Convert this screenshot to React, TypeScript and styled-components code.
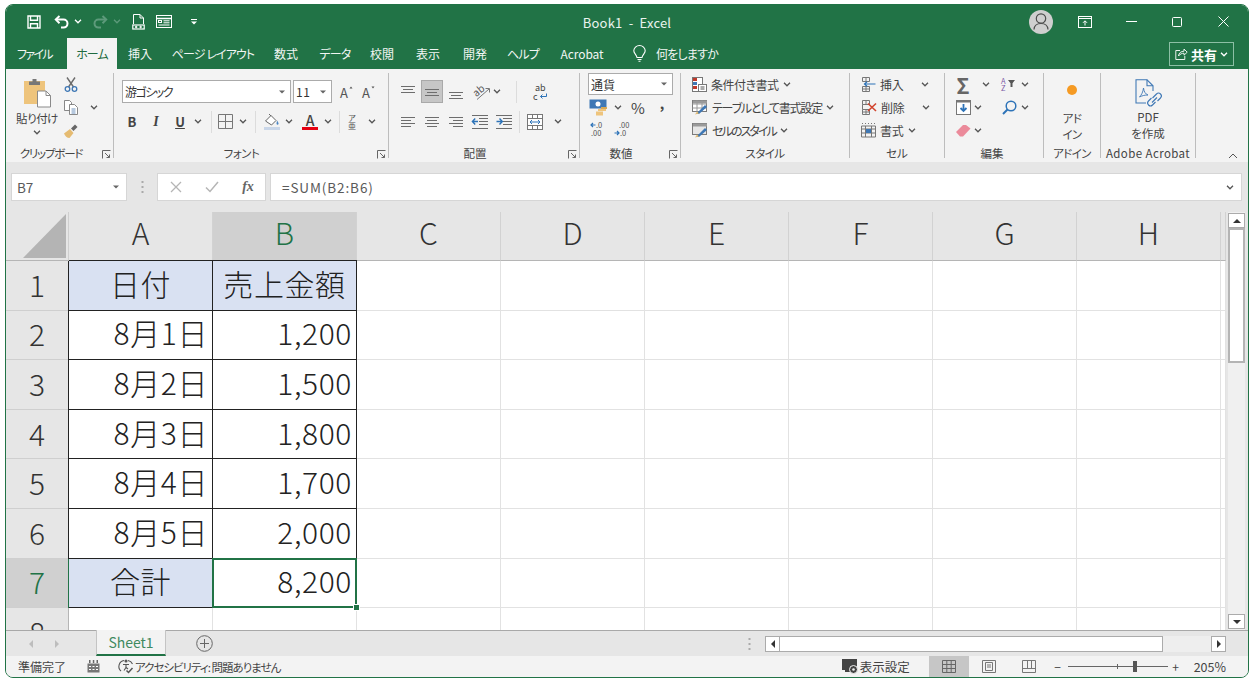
import React from "react";
import styled, { createGlobalStyle } from "styled-components";

const GREEN = "#217346";
const INK = "#444";

const GlobalStyle = createGlobalStyle`
  html, body {
    margin: 0;
    background: #fff;
  }
  body {
    font-family: "Noto Sans CJK JP", "Noto Sans", sans-serif;
    font-feature-settings: "palt";
    font-size: 12px;
    color: ${INK};
  }
  svg {
    display: block;
    flex: none;
    overflow: visible;
  }
`;

const Page = styled.div`
  padding: 4px 0 0 5px;
  width: 1244px;
`;

const Window = styled.div`
  box-sizing: border-box;
  width: 1244px;
  height: 674px;
  border: 1px solid ${GREEN};
  border-radius: 8px;
  overflow: hidden;
  display: flex;
  flex-direction: column;
  background: #e6e6e6;
`;

/* title bar */
const TitleBar = styled.div`
  height: 33px;
  flex: none;
  background: ${GREEN};
  display: grid;
  grid-template-columns: 1fr auto 1fr;
  align-items: center;
`;

const Qat = styled.div`
  display: flex;
  align-items: center;
  padding-left: 20px;
`;

const WindowButtons = styled.div`
  display: flex;
  align-items: center;
  justify-content: flex-end;
  padding-right: 2px;
`;

const Title = styled.div`
  color: #eaf3ee;
  font-size: 13px;
  letter-spacing: 0.2px;
  white-space: pre;
  padding-top: 2px;
`;

const Avatar = styled.div`
  width: 24px;
  height: 24px;
  border-radius: 50%;
  background: #cfcfcf;
  margin-right: 9px;
  display: flex;
  align-items: center;
  justify-content: center;
`;

/* generic fixed-width holder for a ribbon or toolbar glyph */
const Slot = styled.div<{
  $w: number;
  $ml?: number;
  $mt?: number;
  $pb?: number;
  $color?: string;
  $size?: number;
  $bold?: boolean;
}>`
  width: ${(p) => p.$w}px;
  margin-left: ${(p) => p.$ml || 0}px;
  margin-top: ${(p) => p.$mt || 0}px;
  padding-bottom: ${(p) => p.$pb || 0}px;
  flex: none;
  display: flex;
  align-items: center;
  justify-content: center;
  color: ${(p) => p.$color || INK};
  font-size: ${(p) => p.$size || 12}px;
  font-weight: ${(p) => (p.$bold ? 700 : 400)};
  white-space: nowrap;
`;

const ItalicMark = styled.span`
  font-family: "Liberation Serif", serif;
  font-style: italic;
  font-weight: 700;
  font-size: 14px;
`;

const UnderMark = styled.span`
  font-weight: 700;
  font-size: 13px;
  text-decoration: underline;
`;

/* tabs */
const TabRow = styled.div`
  height: 31px;
  flex: none;
  background: ${GREEN};
  display: flex;
`;

const Tab = styled.div<{ $w: number; $active?: boolean; $ml?: number; $ls?: number }>`
  width: ${(p) => p.$w}px;
  margin-left: ${(p) => p.$ml || 0}px;
  flex: none;
  display: flex;
  align-items: center;
  justify-content: center;
  white-space: nowrap;
  font-size: 12px;
  letter-spacing: ${(p) => p.$ls ?? -0.1}px;
  color: ${(p) => (p.$active ? "#1f6b41" : "#f1f6f3")};
  background: ${(p) => (p.$active ? "#f3f3f3" : "transparent")};
`;

const ShareButton = styled.div`
  box-sizing: border-box;
  width: 65px;
  height: 24px;
  margin: 4px 14px 0 auto;
  border: 1px solid #8dbfa5;
  color: #fff;
  font-size: 13px;
  font-weight: 700;
  display: flex;
  align-items: center;
  justify-content: center;
  gap: 3px;
`;

/* ribbon */
const Ribbon = styled.div`
  height: 93px;
  flex: none;
  box-sizing: border-box;
  padding-top: 4px;
  background: #f3f3f3;
  display: flex;
  position: relative;
`;

const Group = styled.div<{ $w: number }>`
  box-sizing: border-box;
  width: ${(p) => p.$w}px;
  height: 85px;
  flex: none;
  border-right: 1px solid #bdbdbd;
  position: relative;
`;

const GroupBody = styled.div<{ $pt?: number; $pl?: number; $row?: boolean }>`
  height: 73px;
  box-sizing: border-box;
  padding-top: ${(p) => p.$pt || 0}px;
  padding-left: ${(p) => p.$pl || 0}px;
  display: flex;
  flex-direction: ${(p) => (p.$row ? "row" : "column")};
`;

const GroupLabel = styled.div<{ $pr?: number; $ls?: number }>`
  height: 14px;
  line-height: 14px;
  padding-right: ${(p) => p.$pr || 0}px;
  text-align: center;
  font-size: 11.5px;
  letter-spacing: ${(p) => p.$ls || 0}px;
  white-space: nowrap;
  color: ${INK};
`;

const Launcher = styled.div`
  position: absolute;
  right: 2px;
  bottom: -1px;
`;

const Collapse = styled.div`
  position: absolute;
  right: 10px;
  bottom: 3px;
`;

const ToolRow = styled.div<{ $h?: number; $gap?: number; $mt?: number }>`
  height: ${(p) => p.$h || 23}px;
  margin-top: ${(p) => p.$mt || 0}px;
  margin-bottom: ${(p) => p.$gap || 0}px;
  display: flex;
  align-items: center;
  flex: none;
`;

const ComboBox = styled.div<{ $w: number; $h?: number; $ml?: number }>`
  box-sizing: border-box;
  width: ${(p) => p.$w}px;
  height: ${(p) => p.$h || 23}px;
  margin-left: ${(p) => p.$ml || 0}px;
  flex: none;
  background: #fff;
  border: 1px solid #ababab;
  display: flex;
  align-items: center;
  justify-content: space-between;
  padding: 0 5px 0 2px;
  font-size: 12px;
  color: #333;
`;

const ComboText = styled.span<{ $ls?: number }>`
  letter-spacing: ${(p) => p.$ls || 0}px;
`;

const Sep = styled.div<{ $w: number }>`
  width: ${(p) => p.$w}px;
  height: 22px;
  flex: none;
  display: flex;
  justify-content: center;
  &::before {
    content: "";
    width: 1px;
    background: #dcdcdc;
  }
`;

const ActiveSlot = styled(Slot)`
  height: 23px;
  background: #c6c6c6;
  border: 1px solid #a9a9a9;
  box-sizing: border-box;
`;

const FontColorA = styled.div`
  display: flex;
  flex-direction: column;
  align-items: center;
  font-size: 14px;
  font-weight: 500;
  line-height: 13px;
  color: #444;
  &::after {
    content: "";
    width: 16px;
    height: 3px;
    background: #e60012;
  }
`;

const Ruby = styled.div`
  display: flex;
  flex-direction: column;
  align-items: center;
  line-height: 8px;
  font-size: 8px;
  color: #555;
`;

const LargeColumn = styled.div<{ $w: number; $ml?: number }>`
  width: ${(p) => p.$w}px;
  margin-left: ${(p) => p.$ml || 0}px;
  flex: none;
  display: flex;
  flex-direction: column;
  align-items: center;
`;

const LargeText = styled.div<{ $mt?: number; $ls?: number }>`
  margin-top: ${(p) => p.$mt || 0}px;
  line-height: 16px;
  font-size: 11.5px;
  letter-spacing: ${(p) => p.$ls || 0}px;
  white-space: nowrap;
  text-align: center;
  color: ${INK};
`;

const StyleLabel = styled.div<{ $ls?: number }>`
  margin: 0 4px 0 4px;
  font-size: 12px;
  letter-spacing: ${(p) => p.$ls ?? -0.2}px;
  white-space: nowrap;
  color: ${INK};
`;

/* formula bar */
const FormulaZone = styled.div`
  height: 50px;
  flex: none;
  box-sizing: border-box;
  padding: 11px 6px 0 5px;
  background: #e6e6e6;
  display: flex;
  align-items: flex-start;
`;

const Field = styled.div<{ $w?: number; $ml?: number }>`
  box-sizing: border-box;
  height: 28px;
  ${(p) => (p.$w ? `width: ${p.$w}px; flex: none;` : "flex: 1;")}
  margin-left: ${(p) => p.$ml || 0}px;
  background: #fff;
  border: 1px solid #d6d6d6;
  display: flex;
  align-items: center;
  font-size: 13.5px;
  color: #5a5a5a;
  font-feature-settings: normal;
`;

const DotsHolder = styled(Slot)`
  height: 28px;
`;

const NameText = styled.span`
  flex: 1;
  padding-left: 5px;
`;

const FormulaText = styled.span`
  flex: 1;
  padding-left: 11px;
  letter-spacing: 0.9px;
`;

const FxMark = styled.span`
  font-family: "Liberation Serif", serif;
  font-style: italic;
  font-weight: 700;
  font-size: 14px;
  color: #666;
`;

/* sheet */
const Main = styled.div`
  flex: 1;
  min-height: 0;
  display: flex;
`;

const Sheet = styled.div`
  width: 1220px;
  flex: none;
  overflow: hidden;
  display: grid;
  grid-template-columns: 63px repeat(8, 144px) 5px;
  grid-template-rows: 49px repeat(8, 49.6px);
  background: #fff;
  font-feature-settings: normal;
  color: #222;
`;

const Corner = styled.div`
  background: #e6e6e6;
  border-right: 1px solid #cfcfcf;
  border-bottom: 1px solid #b5b5b5;
  box-sizing: border-box;
  display: flex;
  align-items: flex-end;
  justify-content: flex-end;
  padding: 0 2px 2px 0;
`;

const ColHead = styled.div<{ $active?: boolean }>`
  box-sizing: border-box;
  background: ${(p) => (p.$active ? "#d0d0d0" : "#e6e6e6")};
  color: ${(p) => (p.$active ? GREEN : "#333")};
  border-right: 1px solid #d2d2d2;
  border-bottom: 1px solid ${(p) => (p.$active ? GREEN : "#b5b5b5")};
  padding-bottom: 9px;
  display: flex;
  align-items: center;
  justify-content: center;
  font-size: 30px;
  font-weight: 300;
  line-height: 36px;
`;

const RowHead = styled.div<{ $active?: boolean }>`
  box-sizing: border-box;
  background: ${(p) => (p.$active ? "#d0d0d0" : "#e6e6e6")};
  color: ${(p) => (p.$active ? GREEN : "#333")};
  border-bottom: 1px solid #cfcfcf;
  border-right: 1px solid ${(p) => (p.$active ? GREEN : "#b5b5b5")};
  padding-bottom: 3px;
  display: flex;
  align-items: center;
  justify-content: center;
  font-size: 30px;
  font-weight: 300;
  line-height: 40px;
`;

const Cell = styled.div<{ $boxed?: boolean; $fill?: boolean; $center?: boolean; $selected?: boolean; $greenEdge?: boolean }>`
  box-sizing: border-box;
  position: relative;
  min-width: 0;
  border-right: 1px solid ${(p) => (p.$boxed ? "#222" : "#e2e2e2")};
  border-bottom: 1px solid ${(p) => (p.$boxed ? "#222" : "#e2e2e2")};
  ${(p) => (p.$boxed ? `box-shadow: -1px 0 0 0 ${p.$greenEdge ? GREEN : "#222"}, 0 -1px 0 0 #222;` : "")}
  background: ${(p) => (p.$fill ? "#d9e1f2" : "#fff")};
  display: flex;
  align-items: center;
  justify-content: ${(p) => (p.$center ? "center" : "flex-end")};
  padding: 0 ${(p) => (p.$center ? 0 : 4)}px 5px 0;
  font-size: 30px;
  font-weight: 300;
  line-height: 40px;
  letter-spacing: 0.6px;
  white-space: nowrap;
  ${(p) =>
    p.$selected
      ? `
    &::before {
      content: "";
      position: absolute;
      inset: -1px -1px -1px -1px;
      border: 2px solid ${GREEN};
    }
    &::after {
      content: "";
      position: absolute;
      right: -4px;
      bottom: -4px;
      width: 5px;
      height: 5px;
      background: ${GREEN};
      border: 1px solid #fff;
      z-index: 1;
    }`
      : ""}
`;

const VScroll = styled.div`
  width: 22px;
  flex: none;
  box-sizing: border-box;
  padding: 0 3px 0 2px;
  display: flex;
`;

const VTrack = styled.div`
  flex: 1;
  background: #f0f0f0;
  padding-top: 1px;
  display: flex;
  flex-direction: column;
`;

const ScrollButton = styled.div<{ $w?: number; $h?: number; $ml?: number }>`
  box-sizing: border-box;
  width: ${(p) => (p.$w ? `${p.$w}px` : "100%")};
  height: ${(p) => p.$h || 15}px;
  margin-left: ${(p) => p.$ml || 0}px;
  flex: none;
  background: #fff;
  border: 1px solid #ababab;
  display: flex;
  align-items: center;
  justify-content: center;
`;

const VThumb = styled.div`
  box-sizing: border-box;
  height: 135px;
  background: #fff;
  border: 2px solid #b4b4b4;
`;

const VDown = styled(ScrollButton)`
  margin-top: auto;
  margin-bottom: 1px;
`;

/* sheet tabs */
const SheetTabs = styled.div`
  height: 26px;
  flex: none;
  box-sizing: border-box;
  background: #e6e6e6;
  border-top: 1px solid #a8a8a8;
  display: flex;
  align-items: center;
`;

const SheetTab = styled.div`
  box-sizing: border-box;
  width: 70px;
  height: 26px;
  margin-top: -1px;
  margin-left: 35px;
  background: #f3f3f3;
  border-left: 1px solid #c4c4c4;
  border-right: 1px solid #c4c4c4;
  border-bottom: 2px solid ${GREEN};
  color: #3f8a60;
  font-size: 14px;
  display: flex;
  align-items: center;
  justify-content: center;
`;

const HTrack = styled.div`
  width: 431px;
  height: 16px;
  flex: none;
  display: flex;
`;

const HThumb = styled.div`
  box-sizing: border-box;
  width: 383px;
  background: #fff;
  border: 1px solid #ababab;
  border-left: 0;
`;

const TrackRest = styled.div`
  flex: 1;
  background: #eeeeee;
`;

/* status bar */
const StatusBar = styled.div`
  height: 21px;
  flex: none;
  background: #f3f3f3;
  display: flex;
  align-items: center;
  font-size: 11.5px;
  color: #444;
`;

const StatusText = styled.div<{ $ml?: number; $size?: number; $ls?: number }>`
  margin-left: ${(p) => p.$ml || 0}px;
  font-size: ${(p) => p.$size || 12}px;
  letter-spacing: ${(p) => p.$ls || 0}px;
  white-space: nowrap;
`;

const StatusRight = styled.div`
  margin-left: auto;
  display: flex;
  align-items: center;
`;

const ViewButton = styled.div<{ $active?: boolean; $ml?: number }>`
  width: 40px;
  height: 21px;
  margin-left: ${(p) => p.$ml || 0}px;
  flex: none;
  background: ${(p) => (p.$active ? "#c6c6c6" : "transparent")};
  display: flex;
  align-items: center;
  justify-content: center;
`;

const Slider = styled.div`
  width: 100px;
  height: 11px;
  margin-left: 5px;
  flex: none;
  position: relative;
  display: flex;
  align-items: center;
  &::before {
    content: "";
    flex: 1;
    height: 1px;
    background: #666;
  }
`;

const SliderTick = styled.div`
  position: absolute;
  left: 49px;
  top: 3px;
  width: 1px;
  height: 5px;
  background: #666;
`;

const SliderThumb = styled.div`
  position: absolute;
  left: 65px;
  top: 0;
  width: 4px;
  height: 11px;
  background: #555;
`;

/* ---------- icons ---------- */

const Chev = ({ color = "#555" }: { color?: string }) => (
  <svg width="8" height="5" viewBox="0 0 8 5">
    <path d="M1 .8 4 3.800 7 .8" fill="none" stroke={color} strokeWidth="1.3" />
  </svg>
);

const Caret = () => (
  <svg width="6" height="4" viewBox="0 0 6 4">
    <path d="M0 .5h6L3 3.500z" fill="#666" />
  </svg>
);

const SaveIcon = () => (
  <svg width="14" height="14" viewBox="0 0 14 14" fill="none" stroke="#fff" strokeWidth="1.4">
    <path d="M1 1h12v12H1z" />
    <path d="M3.500 1v4.200h7V1M3.500 13V8.800h7V13" />
  </svg>
);

const UndoIcon = ({ color = "#fff" }: { color?: string }) => (
  <svg width="16" height="14" viewBox="0 0 16 14" fill="none" stroke={color} strokeWidth="2">
    <path d="M5.500 1 1.800 4.600 5.500 8.200" />
    <path d="M2.200 4.600h7.300a4 4 0 0 1 0 8H7" />
  </svg>
);

const RedoIcon = () => (
  <svg width="16" height="14" viewBox="0 0 16 14" fill="none" stroke="#5d9a7b" strokeWidth="2">
    <path d="M10.500 1l3.700 3.600-3.700 3.600" />
    <path d="M13.800 4.600H6.500a4 4 0 0 0 0 8H9" />
  </svg>
);

const PreviewIcon = () => (
  <svg width="13" height="16" viewBox="0 0 13 16" fill="none" stroke="#fff">
    <path d="M1.500 10V.5h6.500l3.500 3.500v6M8 .5V4h3.500" />
    <rect x=".8" y="11" width="11.400" height="4" strokeWidth="1.2" />
    <circle cx="4.200" cy="13" r=".8" fill="#fff" />
    <circle cx="8.600" cy="13" r=".8" fill="#fff" />
  </svg>
);

const FormIcon = () => (
  <svg width="16" height="13" viewBox="0 0 16 13" fill="none" stroke="#fff">
    <rect x=".5" y=".5" width="15" height="12" />
    <path d="M.5 3.500h15" strokeWidth="1.6" />
    <rect x="2.500" y="5.500" width="3" height="2" />
    <path d="M7.500 5.800h6M7.500 7.800h6M2.500 10h11" />
  </svg>
);

const MoreIcon = () => (
  <svg width="6" height="7" viewBox="0 0 6 7" fill="#fff">
    <path d="M0 1h6v1H0zM0 3.400h6L3 6.600z" />
  </svg>
);

const UserIcon = () => (
  <svg width="16" height="17" viewBox="0 0 16 17" fill="none" stroke="#4d4d4d" strokeWidth="1.2">
    <circle cx="8" cy="5.500" r="4.700" />
    <path d="M1 16.500c.3-4 3-6 7-6s6.700 2 7 6" />
  </svg>
);

const RibbonDisplayIcon = () => (
  <svg width="14" height="12" viewBox="0 0 14 12" fill="none" stroke="#fff">
    <rect x=".5" y=".5" width="13" height="11" />
    <path d="M.5 2.500h13" />
    <path d="M7 9.500V5M5 6.800 7 4.800l2 2" />
  </svg>
);

const MinIcon = () => (
  <svg width="11" height="1" viewBox="0 0 11 1">
    <path d="M0 0h11v1H0z" fill="#fff" />
  </svg>
);

const MaxIcon = () => (
  <svg width="10" height="10" viewBox="0 0 10 10">
    <rect x=".5" y=".5" width="9" height="9" rx="1" fill="none" stroke="#fff" />
  </svg>
);

const CloseIcon = () => (
  <svg width="11" height="11" viewBox="0 0 11 11">
    <path d="M.5.500l10 10M10.500.500l-10 10" stroke="#fff" />
  </svg>
);

const BulbIcon = () => (
  <svg width="13" height="17" viewBox="0 0 13 17" fill="none" stroke="#fff" strokeWidth="1.1">
    <path d="M4 12.500C3.500 9.500.8 8.500.8 5.800a5.700 5.300 0 0 1 11.400 0c0 2.700-2.700 3.700-3.200 6.700z" />
    <path d="M4.500 14.500h4M5.500 16.300h2" />
  </svg>
);

const ShareIcon = () => (
  <svg width="13" height="12" viewBox="0 0 13 12" fill="none" stroke="#fff" strokeWidth="0.9">
    <path d="M5 2.500H.8v9h9V8" />
    <path d="M3.500 8c.3-3 2.500-4.800 5.500-4.800V1l3.200 3.200L9 7.200V5.200C7 5.200 5 6 3.500 8z" />
  </svg>
);

const PasteIcon = () => (
  <svg width="28" height="30" viewBox="0 0 28 30">
    <path d="M1 3h21v23H1z" fill="#eec47c" />
    <path d="M6 3.500h3.500V1h4v2.500H17v3.500H6z" fill="#777" />
    <path d="M14.500 13H23l4.500 4.500V29h-13z" fill="#fff" stroke="#8a8a8a" />
    <path d="M23 13v4.500h4.500" fill="none" stroke="#8a8a8a" />
  </svg>
);

const ScissorsIcon = () => (
  <svg width="14" height="15" viewBox="0 0 14 15" fill="none">
    <path d="M3 .5 9.500 10M11 .5 4.500 10" stroke="#6c6c6c" strokeWidth="1.4" />
    <circle cx="3.500" cy="12" r="2.300" stroke="#3f78b5" strokeWidth="1.3" />
    <circle cx="10.500" cy="12" r="2.300" stroke="#3f78b5" strokeWidth="1.3" />
  </svg>
);

const CopyIcon = () => (
  <svg width="14" height="15" viewBox="0 0 14 15" fill="#fff" stroke="#7a7a7a" strokeWidth="0.9">
    <path d="M.5.500h5l2 2v8h-7z" />
    <path d="M5.500 4.500h5l3 3v7h-8z" />
    <path d="M7.500 9h4M7.500 11h4M7.500 13h4" fill="none" stroke="#5f86b5" />
  </svg>
);

const PainterIcon = () => (
  <svg width="14" height="14" viewBox="0 0 14 14">
    <path d="M0 9.500 6 5l3.500 4L5.500 14C3 14 1 12 0 9.500z" fill="#e5bb71" />
    <path d="M7 4.500 11 .5l2.500 2.500-4 4z" fill="#666" />
  </svg>
);

const Launch = () => (
  <svg width="9" height="9" viewBox="0 0 9 9" fill="none" stroke="#666">
    <path d="M.5 8.500V.5h8" />
    <path d="M3 3l4.500 4.500M7.500 4.500v3h-3" />
  </svg>
);

const GrowA = ({ up }: { up: boolean }) => (
  <svg width="14" height="18" viewBox="0 0 14 18">
    <text x="0" y="15" fontSize="13" fill="#555" fontFamily="Noto Sans CJK JP">A</text>
    <path d={up ? "M9.500 5.500 11 3.500l1.500 2z" : "M9.500 3.500 11 5.500l1.500-2z"} fill="#555" />
  </svg>
);

const BorderIcon = () => (
  <svg width="15" height="15" viewBox="0 0 15 15" fill="none" stroke="#777">
    <path d="M.5.500h14v14H.5zM7.500.500v14M.5 7.500h14" />
  </svg>
);

const FillIcon = () => (
  <svg width="16" height="17" viewBox="0 0 16 17">
    <path d="M1.500 8 7 2.500 12 7.500 7.500 12z" fill="#fff" stroke="#666" />
    <path d="M5 1l2 2" stroke="#666" />
    <path d="M13 7.500c1 1.500 1.800 2.500 1.500 3.500-.4 1-1.800.8-2-.2z" fill="#4b86c4" />
    <rect x="0" y="14" width="16" height="3" fill="#c9d6e8" />
  </svg>
);

const LinesIcon = ({ rows, w = 14 }: { rows: [number, number, number][]; w?: number }) => (
  <svg width={w} height="14" viewBox={`0 0 ${w} 14`} stroke="#6d6d6d">
    {rows.map(([a, b, y]) => (
      <path key={`${a}-${b}-${y}`} d={`M${a} ${y}.5H${b}`} />
    ))}
  </svg>
);

const OrientIcon = () => (
  <svg width="20" height="20" viewBox="0 0 20 20">
    <text x="2" y="12" fontSize="10" fill="#555" transform="rotate(-40 8 9)" fontFamily="Noto Sans CJK JP">ab</text>
    <path d="M6 17.500 18 7M14.500 6.500h4V10.500" fill="none" stroke="#777" />
  </svg>
);

const IndentIcon = ({ flip }: { flip?: boolean }) => (
  <svg width="16" height="14" viewBox="0 0 16 14">
    <path d="M0 .5h16M7 3.500h9M7 6.500h9M7 9.500h9M0 13.500h16" stroke="#6d6d6d" />
    <path d={flip ? "M6 6.500H.5M3.500 3.500l2.800 3-2.800 3" : "M.5 6.500H6M3.200 3.500l-2.800 3 2.800 3"} fill="none" stroke="#2d73b8" strokeWidth="1.4" />
  </svg>
);

const WrapIcon = () => (
  <svg width="18" height="20" viewBox="0 0 18 20">
    <text x="4" y="9" fontSize="9" fill="#444" fontFamily="Noto Sans CJK JP">ab</text>
    <text x="2" y="18" fontSize="9" fill="#444" fontFamily="Noto Sans CJK JP">c</text>
    <path d="M15.500 11.500v3h-6M11.500 12.500l-2 2 2 2" fill="none" stroke="#2d73b8" />
  </svg>
);

const MergeIcon = () => (
  <svg width="16" height="16" viewBox="0 0 16 16" fill="none" stroke="#777">
    <rect x=".5" y=".5" width="15" height="15" fill="#fff" />
    <path d="M.5 4.500h15M.5 11.500h15M5.500.5v4M10.500.5v4M5.500 11.500v4M10.500 11.500v4" />
    <path d="M3 8h10M5 6 3 8l2 2M11 6l2 2-2 2" stroke="#2d73b8" />
  </svg>
);

const CurrencyIcon = () => (
  <svg width="20" height="17" viewBox="0 0 20 17">
    <rect x=".5" y=".5" width="17" height="9" fill="#3f78b5" />
    <circle cx="9" cy="5" r="2.500" fill="#fff" />
    <path d="M9 10h8v2H9zM7 12.500h7v4H7z" fill="#eec47c" />
    <path d="M12 8h6v2h-6z" fill="#d8a956" />
  </svg>
);

const DecimalIcon = ({ more }: { more?: boolean }) => (
  <svg width="18" height="17" viewBox="0 0 18 17" fontFamily="Noto Sans CJK JP" fontSize="7.500" fill="#555">
    <text x={more ? 6 : 7} y="7">{more ? ".00" : ".0"}</text>
    <text x={more ? 7 : 2} y="15">{more ? ".0" : ".00"}</text>
    <path
      d={more ? "M1.500 12H6M4 10l2 2-2 2" : "M6.500 4H2M4 2 2 4l2 2"}
      fill="none"
      stroke="#2d73b8"
      strokeWidth="1.2"
    />
  </svg>
);

const CondIcon = () => (
  <svg width="15" height="15" viewBox="0 0 15 15">
    <rect x=".5" y=".5" width="10" height="14" fill="#fff" stroke="#777" />
    <path d="M1 1h4v3H1z" fill="#c0392b" />
    <path d="M1 5h4v3H1z" fill="#3f78b5" />
    <path d="M1 9h4v3H1z" fill="#c0392b" />
    <rect x="6.500" y="7.500" width="8" height="7" fill="#fff" stroke="#777" />
    <path d="M8.500 10h4M8.500 12h4" stroke="#555" />
  </svg>
);

const TableIcon = ({ plain }: { plain?: boolean }) => (
  <svg width="16" height="15" viewBox="0 0 16 15">
    <rect x=".5" y=".5" width="14" height="11" fill={plain ? "#e6e6e6" : "#fff"} stroke="#7b7b7b" />
    {!plain && <path d="M.5 4h14M.5 8h14M5 .5v11M10 .5v11" stroke="#9a9a9a" />}
    <path d="M1 .5h14v3H1z" fill="#9a9a9a" />
    <path d="M5 13 13 5l2 2-8 7H5z" fill="#3f78b5" />
    <path d="M3 14.500l2-3 2 2z" fill="#e5bb71" />
  </svg>
);

const InsertIcon = () => (
  <svg width="15" height="15" viewBox="0 0 15 15" fill="none" stroke="#777">
    <path d="M1.500.5h7v4h-7zM1.500 9.500h7v5h-7zM5 .5v4M5 9.500v5M1.500 12h7" />
    <path d="M14.500 7H3.500M6 4.800 3.500 7 6 9.200" stroke="#2d73b8" strokeWidth="1.2" />
  </svg>
);

const DeleteIcon = () => (
  <svg width="16" height="15" viewBox="0 0 16 15" fill="none" stroke="#777">
    <path d="M1.500.5h7v4h-7zM1.500 9.500h7v5h-7zM5 .5v4M5 9.500v5M1.500 12h7M1.500 4.500v5" />
    <path d="M7 3.500l8 7.500M15 3.500 7 11" stroke="#d2452f" strokeWidth="1.6" />
  </svg>
);

const FormatIcon = () => (
  <svg width="15" height="15" viewBox="0 0 15 15" fill="none" stroke="#777">
    <path d="M.5 3h14v11H.5zM.5 6h14M.5 10h14M4.500 3v11M10.500 3v11" />
    <path d="M1 .5h1M4 .5h1M7 .5h1M10 .5h1M13 .5h1" />
    <rect x="5" y="6" width="5" height="4" fill="#3f78b5" stroke="none" />
  </svg>
);

const FillDownIcon = () => (
  <svg width="15" height="15" viewBox="0 0 15 15">
    <rect x=".5" y=".5" width="14" height="14" fill="#fff" stroke="#777" />
    <path d="M.5 1h14v1.500H.5z" fill="#777" />
    <path d="M7.500 4v7M4.500 8l3 3 3-3" fill="none" stroke="#2d73b8" strokeWidth="1.8" />
  </svg>
);

const FindIcon = () => (
  <svg width="15" height="15" viewBox="0 0 15 15" fill="none" stroke="#2d73b8" strokeWidth="1.5">
    <circle cx="9" cy="6" r="4.800" />
    <path d="M5.500 9.500 1 14" strokeWidth="2" />
  </svg>
);

const SortIcon = () => (
  <svg width="16" height="17" viewBox="0 0 16 17" fontFamily="Noto Sans CJK JP" fontSize="7.500" fill="#7a5aa6">
    <text x="0" y="8">A</text>
    <text x="0" y="15">Z</text>
    <path d="M7 4h7L11.500 7.200V11H9.500V7.200z" fill="#555" />
  </svg>
);

const EraserIcon = () => (
  <svg width="15" height="12" viewBox="0 0 15 12">
    <path d="M0 7 7 0h3l4.500 3.500L7 11.500H4z" fill="#eb8a9a" />
  </svg>
);

const OrangeDot = () => (
  <svg width="12" height="12" viewBox="0 0 12 12">
    <circle cx="6" cy="6" r="5" fill="#f59a23" />
  </svg>
);

const PdfIcon = () => (
  <svg width="28" height="29" viewBox="0 0 28 29" fill="none" stroke="#3f78b5" strokeWidth="1.1">
    <path d="M12 24H2V.8h11L19 6.800V12" />
    <path d="M13 .8v6h6" />
    <path d="M5.500 18c2-2 3.500-5 4-9 .5 4 2 6 4.500 7-3 0-5.500.5-8.500 2z" strokeWidth="0.9" />
    <path d="M18.500 19l4-4a2.800 2.800 0 0 1 4 4l-3 3M21.500 23l-3 3a2.800 2.800 0 0 1-4-4l3-3M18 23.500l5-5" />
  </svg>
);

const XMark = () => (
  <svg width="12" height="12" viewBox="0 0 12 12">
    <path d="M1 1l10 10M11 1 1 11" stroke="#b5b5b5" strokeWidth="1.3" />
  </svg>
);

const CheckMark = () => (
  <svg width="14" height="12" viewBox="0 0 14 12">
    <path d="M1 6.500 5 10.500 13 1" fill="none" stroke="#b5b5b5" strokeWidth="1.500" />
  </svg>
);

const Dots = ({ color = "#aaa" }: { color?: string }) => (
  <svg width="3" height="12" viewBox="0 0 3 12" fill={color}>
    <rect x=".5" y="0" width="2" height="2" />
    <rect x=".5" y="5" width="2" height="2" />
    <rect x=".5" y="10" width="2" height="2" />
  </svg>
);

const CornerTriangle = () => (
  <svg width="43" height="44" viewBox="0 0 43 44">
    <path d="M43 0v44H0z" fill="#b4b4b4" />
  </svg>
);

const Arrow = ({ dir, color = "#333", size = 4 }: { dir: "up" | "down" | "left" | "right"; color?: string; size?: number }) => {
  const paths = {
    up: "M0 4 4 0l4 4z",
    down: "M0 0h8L4 4z",
    left: "M4 0v8L0 4z",
    right: "M0 0l4 4-4 4z",
  };
  const horizontal = dir === "left" || dir === "right";
  return (
    <svg width={horizontal ? size : size * 2} height={horizontal ? size * 2 : size} viewBox={horizontal ? "0 0 4 8" : "0 0 8 4"}>
      <path d={paths[dir]} fill={color} />
    </svg>
  );
};

const PlusCircle = () => (
  <svg width="17" height="17" viewBox="0 0 17 17" fill="none" stroke="#666">
    <circle cx="8.500" cy="8.500" r="7.800" />
    <path d="M8.500 4v9M4 8.500h9" />
  </svg>
);

const MacroIcon = () => (
  <svg width="13" height="13" viewBox="0 0 13 13">
    <rect x=".5" y="3.500" width="12" height="9" fill="#777" />
    <path d="M2 0h1.500v3H2zM5.800 0h1.500v3H5.800zM9.500 0H11v3H9.500z" fill="#666" />
    <path d="M2 6h2v1H2zM5.500 6h2v1h-2zM9 6h2v1H9zM2 9h2v1H2zM5.500 9h2v1h-2zM9 9h2v1H9z" fill="#fff" />
  </svg>
);

const AccessIcon = () => (
  <svg width="16" height="15" viewBox="0 0 16 15" fill="none" stroke="#555" strokeWidth="1.1">
    <path d="M6 1.500A6 6 0 0 0 3 12M10 1.500a6 6 0 0 1 4.500 3.500" />
    <circle cx="8" cy="2" r="1" fill="#555" />
    <path d="M5 5.500h6M8 5.500v3M8 8.500l-2 3M8 8.500l2 1.500" />
    <path d="M8.500 11.500l2 2 4-4.500" strokeWidth="1.500" />
  </svg>
);

const ViewSettingsIcon = () => (
  <svg width="18" height="16" viewBox="0 0 18 16">
    <rect x="0" y="0" width="15" height="11" fill="#444" />
    <path d="M3 11h6v2H3z" fill="#444" />
    <circle cx="11.500" cy="10.500" r="4" fill="#444" stroke="#f3f3f3" />
    <circle cx="11.500" cy="10.500" r="1.300" fill="#f3f3f3" />
  </svg>
);

const NormalViewIcon = () => (
  <svg width="14" height="13" viewBox="0 0 14 13" fill="none" stroke="#666">
    <path d="M.5.500h13v12H.5zM.5 4.500h13M.5 8.500h13M4.800.5v12M9.200.5v12" />
  </svg>
);

const PageViewIcon = () => (
  <svg width="14" height="13" viewBox="0 0 14 13" fill="none" stroke="#777">
    <path d="M.5.500h13v12H.5zM3.500 2.500h7v8h-7zM5 5h4M5 7h4" />
  </svg>
);

const BreakViewIcon = () => (
  <svg width="14" height="13" viewBox="0 0 14 13" fill="none" stroke="#777">
    <path d="M.5.500h13v12H.5zM.5 8.500h13M5.500.5v8M9.500.5v8" />
  </svg>
);

/* ---------- data ---------- */

const tabs = [
  { label: "ファイル", w: 57, ls: -1.6 },
  { label: "ホーム", w: 50, active: true, ml: 4, ls: -0.9 },
  { label: "挿入", w: 46 },
  { label: "ページ レイアウト", w: 100, ls: -0.9 },
  { label: "数式", w: 46 },
  { label: "データ", w: 52, ls: -0.8 },
  { label: "校閲", w: 42 },
  { label: "表示", w: 50 },
  { label: "開発", w: 44 },
  { label: "ヘルプ", w: 52, ls: -0.8 },
  { label: "Acrobat", w: 66 },
];

const columns = ["A", "B", "C", "D", "E", "F", "G", "H"];

const rows: [string, string][] = [
  ["日付", "売上金額"],
  ["8月1日", "1,200"],
  ["8月2日", "1,500"],
  ["8月3日", "1,800"],
  ["8月4日", "1,700"],
  ["8月5日", "2,000"],
  ["合計", "8,200"],
];

const TOP: [number, number, number][] = [[0, 14, 1], [2, 12, 4], [0, 14, 7]];
const MID: [number, number, number][] = [[0, 14, 4], [2, 12, 7], [0, 14, 10]];
const BOT: [number, number, number][] = [[0, 14, 7], [2, 12, 10], [0, 14, 13]];
const LEFT: [number, number, number][] = [[0, 14, 2], [0, 10, 5], [0, 14, 8], [0, 10, 11]];
const CENTER: [number, number, number][] = [[0, 14, 2], [2, 12, 5], [0, 14, 8], [2, 12, 11]];
const RIGHT: [number, number, number][] = [[0, 14, 2], [4, 14, 5], [0, 14, 8], [4, 14, 11]];

export default function App() {
  return (
    <Page>
      <GlobalStyle />
      <Window>
        <TitleBar>
          <Qat>
            <Slot $w={16}><SaveIcon /></Slot>
            <Slot $w={16} $ml={12}><UndoIcon /></Slot>
            <Slot $w={10} $ml={3}><Chev color="#fff" /></Slot>
            <Slot $w={16} $ml={9}><RedoIcon /></Slot>
            <Slot $w={10} $ml={4}><Chev color="#5d9a7b" /></Slot>
            <Slot $w={16} $ml={8}><PreviewIcon /></Slot>
            <Slot $w={16} $ml={10}><FormIcon /></Slot>
            <Slot $w={10} $ml={17}><MoreIcon /></Slot>
          </Qat>
          <Title>Book1  -  Excel</Title>
          <WindowButtons>
            <Avatar><UserIcon /></Avatar>
            <Slot $w={46}><RibbonDisplayIcon /></Slot>
            <Slot $w={46}><MinIcon /></Slot>
            <Slot $w={46}><MaxIcon /></Slot>
            <Slot $w={46}><CloseIcon /></Slot>
          </WindowButtons>
        </TitleBar>

        <TabRow>
          {tabs.map((t) => (
            <Tab key={t.label} $w={t.w} $active={t.active} $ml={t.ml} $ls={t.ls}>{t.label}</Tab>
          ))}
          <Tab $w={36} $ml={6}><BulbIcon /></Tab>
          <Tab $w={60} $ls={-0.8}>何をしますか</Tab>
          <ShareButton>
            <ShareIcon />
            共有
            <Chev color="#fff" />
          </ShareButton>
        </TabRow>

        <Ribbon>
          <Group $w={108}>
            <GroupBody $row $pl={8}>
              <LargeColumn $w={46}>
                <Slot $w={46} $mt={5}><PasteIcon /></Slot>
                <LargeText $mt={2} $ls={-0.5}>貼り付け</LargeText>
                <Slot $w={46} $mt={4}><Chev /></Slot>
              </LargeColumn>
              <LargeColumn $w={16} $ml={3}>
                <ToolRow><ScissorsIcon /></ToolRow>
                <ToolRow><CopyIcon /></ToolRow>
                <ToolRow><PainterIcon /></ToolRow>
              </LargeColumn>
              <LargeColumn $w={10} $ml={10}>
                <ToolRow />
                <ToolRow><Chev /></ToolRow>
              </LargeColumn>
            </GroupBody>
            <GroupLabel $pr={17} $ls={-1.2}>クリップボード</GroupLabel>
            <Launcher><Launch /></Launcher>
          </Group>

          <Group $w={275}>
            <GroupBody $pt={7} $pl={8}>
              <ToolRow $gap={7}>
                <ComboBox $w={169}><ComboText $ls={-1.5}>游ゴシック</ComboText><Caret /></ComboBox>
                <ComboBox $w={39} $ml={2}><ComboText $ls={0.6}>11</ComboText><Caret /></ComboBox>
                <Slot $w={22} $ml={4}><GrowA up /></Slot>
                <Slot $w={22}><GrowA up={false} /></Slot>
              </ToolRow>
              <ToolRow>
                <Slot $w={20} $bold $size={13}>B</Slot>
                <Slot $w={24} $ml={2}><ItalicMark>I</ItalicMark></Slot>
                <Slot $w={24}><UnderMark>U</UnderMark></Slot>
                <Slot $w={12}><Chev /></Slot>
                <Sep $w={14} />
                <Slot $w={14}><BorderIcon /></Slot>
                <Slot $w={22}><Chev /></Slot>
                <Sep $w={2} />
                <Slot $w={24} $ml={4}><FillIcon /></Slot>
                <Slot $w={10}><Chev /></Slot>
                <Slot $w={24} $ml={4}><FontColorA>A</FontColorA></Slot>
                <Slot $w={12}><Chev /></Slot>
                <Sep $w={10} />
                <Slot $w={16}><Ruby><span>ア</span><span>亜</span></Ruby></Slot>
                <Slot $w={12} $ml={6}><Chev /></Slot>
              </ToolRow>
            </GroupBody>
            <GroupLabel $pr={19} $ls={-0.5}>フォント</GroupLabel>
            <Launcher><Launch /></Launcher>
          </Group>

          <Group $w={191}>
            <GroupBody $pt={7} $pl={12}>
              <ToolRow $gap={7}>
                <Slot $w={14}><LinesIcon rows={TOP} /></Slot>
                <ActiveSlot $w={22} $ml={6}><LinesIcon rows={MID} /></ActiveSlot>
                <Slot $w={14} $ml={6}><LinesIcon rows={BOT} /></Slot>
                <Slot $w={18} $ml={9}><OrientIcon /></Slot>
                <Slot $w={8} $ml={3}><Chev /></Slot>
                <Sep $w={31} />
                <Slot $w={16}><WrapIcon /></Slot>
              </ToolRow>
              <ToolRow>
                <Slot $w={14}><LinesIcon rows={LEFT} /></Slot>
                <Slot $w={14} $ml={10}><LinesIcon rows={CENTER} /></Slot>
                <Slot $w={14} $ml={10}><LinesIcon rows={RIGHT} /></Slot>
                <Slot $w={16} $ml={9}><IndentIcon /></Slot>
                <Slot $w={16} $ml={8}><IndentIcon flip /></Slot>
                <Sep $w={15} />
                <Slot $w={16}><MergeIcon /></Slot>
                <Slot $w={8} $ml={11}><Chev /></Slot>
              </ToolRow>
            </GroupBody>
            <GroupLabel $pr={18}>配置</GroupLabel>
            <Launcher><Launch /></Launcher>
          </Group>

          <Group $w={101}>
            <GroupBody $pl={8}>
              <ComboBox $w={85} $h={22}>通貨<Caret /></ComboBox>
              <ToolRow $h={22} $mt={1}>
                <Slot $w={20} $ml={1}><CurrencyIcon /></Slot>
                <Slot $w={10} $ml={4}><Chev /></Slot>
                <Slot $w={18} $ml={6} $size={15}>%</Slot>
                <Slot $w={10} $ml={10} $bold $size={14} $pb={8}>,</Slot>
              </ToolRow>
              <ToolRow $h={22}>
                <Slot $w={20}><DecimalIcon /></Slot>
                <Slot $w={18} $ml={5}><DecimalIcon more /></Slot>
              </ToolRow>
            </GroupBody>
            <GroupLabel $pr={18}>数値</GroupLabel>
            <Launcher><Launch /></Launcher>
          </Group>

          <Group $w={169}>
            <GroupBody $pl={11}>
              <ToolRow><CondIcon /><StyleLabel $ls={-0.5}>条件付き書式</StyleLabel><Chev /></ToolRow>
              <ToolRow><TableIcon /><StyleLabel $ls={-1.2}>テーブルとして書式設定</StyleLabel><Chev /></ToolRow>
              <ToolRow><TableIcon plain /><StyleLabel $ls={-1.9}>セルのスタイル</StyleLabel><Chev /></ToolRow>
            </GroupBody>
            <GroupLabel $ls={-0.5}>スタイル</GroupLabel>
          </Group>

          <Group $w={95}>
            <GroupBody $pl={11}>
              <ToolRow><InsertIcon /><StyleLabel>挿入</StyleLabel><Slot $w={8} $ml={13}><Chev /></Slot></ToolRow>
              <ToolRow><DeleteIcon /><StyleLabel>削除</StyleLabel><Slot $w={8} $ml={13}><Chev /></Slot></ToolRow>
              <ToolRow><FormatIcon /><StyleLabel>書式</StyleLabel><Chev /></ToolRow>
            </GroupBody>
            <GroupLabel>セル</GroupLabel>
          </Group>

          <Group $w={99}>
            <GroupBody $pl={10}>
              <ToolRow>
                <Slot $w={16} $size={21} $color="#666" $bold>Σ</Slot>
                <Slot $w={8} $ml={11}><Chev /></Slot>
                <Slot $w={16} $ml={11}><SortIcon /></Slot>
                <Slot $w={8} $ml={4}><Chev /></Slot>
              </ToolRow>
              <ToolRow>
                <Slot $w={16}><FillDownIcon /></Slot>
                <Slot $w={8} $ml={3}><Chev /></Slot>
                <Slot $w={16} $ml={19}><FindIcon /></Slot>
                <Slot $w={8} $ml={4}><Chev /></Slot>
              </ToolRow>
              <ToolRow>
                <Slot $w={16}><EraserIcon /></Slot>
                <Slot $w={8} $ml={3}><Chev /></Slot>
              </ToolRow>
            </GroupBody>
            <GroupLabel $pr={4}>編集</GroupLabel>
          </Group>

          <Group $w={57}>
            <GroupBody>
              <Slot $w={56} $mt={11}><OrangeDot /></Slot>
              <LargeText $mt={14} $ls={-0.5}>アド<br />イン</LargeText>
            </GroupBody>
            <GroupLabel $ls={-0.6}>アドイン</GroupLabel>
          </Group>

          <Group $w={95}>
            <GroupBody>
              <Slot $w={94} $mt={6}><PdfIcon /></Slot>
              <LargeText $mt={1}>PDF<br />を作成</LargeText>
            </GroupBody>
            <GroupLabel $ls={0.4}>Adobe Acrobat</GroupLabel>
          </Group>
          <Collapse><svg width="10" height="6" viewBox="0 0 10 6"><path d="M1 5l4-4 4 4" fill="none" stroke="#555" /></svg></Collapse>
        </Ribbon>

        <FormulaZone>
          <Field $w={116}>
            <NameText>B7</NameText>
            <Slot $w={20}><Caret /></Slot>
          </Field>
          <DotsHolder $w={30}><Dots /></DotsHolder>
          <Field $w={109}>
            <Slot $w={36}><XMark /></Slot>
            <Slot $w={36}><CheckMark /></Slot>
            <Slot $w={36}><FxMark>fx</FxMark></Slot>
          </Field>
          <Field $ml={4}>
            <FormulaText>=SUM(B2:B6)</FormulaText>
            <Slot $w={22}><Chev /></Slot>
          </Field>
        </FormulaZone>

        <Main>
          <Sheet>
            <Corner><CornerTriangle /></Corner>
            {columns.map((c) => (
              <ColHead key={c} $active={c === "B"}>{c}</ColHead>
            ))}
            <ColHead />
            {[1, 2, 3, 4, 5, 6, 7, 8].map((n) => {
              const row = rows[n - 1];
              return (
                <React.Fragment key={n}>
                  <RowHead $active={n === 7}>{n}</RowHead>
                  <Cell $boxed={!!row} $fill={n === 1 || n === 7} $center={n === 1 || n === 7} $greenEdge={n === 7}>
                    {row && row[0]}
                  </Cell>
                  <Cell $boxed={!!row} $fill={n === 1} $center={n === 1} $selected={n === 7}>
                    {row && row[1]}
                  </Cell>
                  {columns.slice(2).map((c) => <Cell key={c} />)}
                  <Cell />
                </React.Fragment>
              );
            })}
          </Sheet>
          <VScroll>
            <VTrack>
              <ScrollButton><Arrow dir="up" /></ScrollButton>
              <VThumb />
              <VDown><Arrow dir="down" /></VDown>
            </VTrack>
          </VScroll>
        </Main>

        <SheetTabs>
          <Slot $w={8} $ml={21}><Arrow dir="left" color="#bdbdbd" /></Slot>
          <Slot $w={8} $ml={18}><Arrow dir="right" color="#bdbdbd" /></Slot>
          <SheetTab>Sheet1</SheetTab>
          <Slot $w={17} $ml={30}><PlusCircle /></Slot>
          <Slot $w={4} $ml={534}><Dots /></Slot>
          <ScrollButton $w={15} $h={16} $ml={14}><Arrow dir="left" /></ScrollButton>
          <HTrack>
            <HThumb />
            <TrackRest />
          </HTrack>
          <ScrollButton $w={15} $h={16}><Arrow dir="right" /></ScrollButton>
        </SheetTabs>

        <StatusBar>
          <StatusText $ml={12}>準備完了</StatusText>
          <Slot $w={13} $ml={21}><MacroIcon /></Slot>
          <Slot $w={16} $ml={18}><AccessIcon /></Slot>
          <StatusText $ml={1} $size={11.5} $ls={-1}>アクセシビリティ: 問題ありません</StatusText>
          <StatusRight>
            <Slot $w={18}><ViewSettingsIcon /></Slot>
            <StatusText $size={12.5}>表示設定</StatusText>
            <ViewButton $active $ml={19}><NormalViewIcon /></ViewButton>
            <ViewButton><PageViewIcon /></ViewButton>
            <ViewButton><BreakViewIcon /></ViewButton>
            <Slot $w={10} $ml={4}>−</Slot>
            <Slider><SliderTick /><SliderThumb /></Slider>
            <Slot $w={12} $ml={2}>+</Slot>
            <StatusText $ml={12} $size={12.5}>205%</StatusText>
            <Slot $w={22} />
          </StatusRight>
        </StatusBar>
      </Window>
    </Page>
  );
}
